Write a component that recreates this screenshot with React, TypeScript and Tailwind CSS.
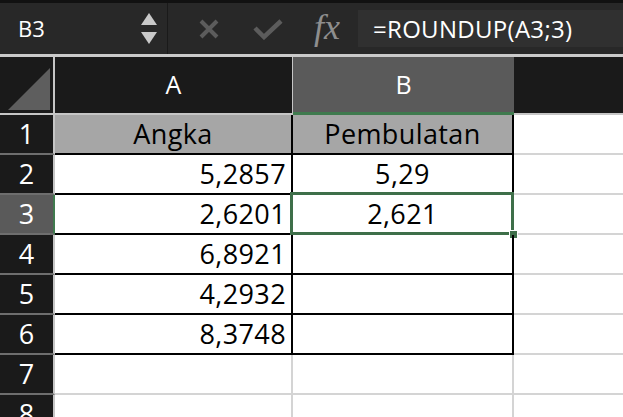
import React from 'react';

const rows = [
  { n: 1, a: 'Angka', b: 'Pembulatan', head: true },
  { n: 2, a: '5,2857', b: '5,29' },
  { n: 3, a: '2,6201', b: '2,621' },
  { n: 4, a: '6,8921', b: '' },
  { n: 5, a: '4,2932', b: '' },
  { n: 6, a: '8,3748', b: '' },
  { n: 7, a: '', b: '', empty: true },
  { n: 8, a: '', b: '', empty: true },
];

export default function App() {
  return (
    <div className="w-[623px] h-[417px] overflow-hidden bg-white font-['Open_Sans',sans-serif] font-medium">
      {/* Formula bar */}
      <div className="h-[54px] flex items-stretch bg-[#282828] border-t-[3px] border-[#111]">
        <div className="w-[168px] flex items-center justify-between pl-[18px] pr-[10px] border-r border-[#1a1a1a]">
          <span className="text-white text-[22px]">B3</span>
          <div className="flex flex-col gap-[7px] items-center">
            <svg width="16" height="12" viewBox="0 0 16 12"><path d="M8 0 L16 12 L0 12 Z" fill="#c9c9c9" /></svg>
            <svg width="16" height="12" viewBox="0 0 16 12"><path d="M0 0 L16 0 L8 12 Z" fill="#c9c9c9" /></svg>
          </div>
        </div>
        <div className="w-[190px] flex items-center">
          <svg className="ml-[31px]" width="20" height="20" viewBox="0 0 20 20">
            <path d="M2 2 L18 18 M18 2 L2 18" stroke="#5c5c5c" strokeWidth="4" />
          </svg>
          <svg className="ml-[34px]" width="30" height="22" viewBox="0 0 30 22">
            <path d="M2 10 L11 19 L28 3" stroke="#5c5c5c" strokeWidth="4.5" fill="none" />
          </svg>
          <span className="ml-[31px] text-[36px] italic text-[#8e8e8e] font-['Liberation_Serif',serif] font-normal leading-none -mt-[4px]">fx</span>
        </div>
        <div className="flex-1 my-[7px] bg-[#303030] flex items-center pl-[15px]">
          <span className="text-white text-[24px] tracking-[0.3px]">=ROUNDUP(A3;3)</span>
        </div>
      </div>
      <div className="h-[3px] bg-[#cacaca]" />

      {/* Column headers */}
      <div className="h-[58px] flex bg-[#1a1a1a]">
        <div className="w-[55px] border-r-2 border-b-2 border-[#c6c6c6] flex items-end justify-end pr-[3px] pb-[3px]">
          <svg width="42" height="42" viewBox="0 0 42 42"><path d="M42 0 L42 42 L0 42 Z" fill="#5e5e5e" /></svg>
        </div>
        <div className="w-[238px] border-r border-b-2 border-[#c6c6c6] flex items-center justify-center text-white text-[25px]">A</div>
        <div className="w-[221px] bg-[#5a5a5a] border-b-[3px] border-[#3f7a4e] flex items-center justify-center text-white text-[25px]">B</div>
        <div className="flex-1 border-b-2 border-[#c6c6c6]" />
      </div>

      {/* Rows */}
      {rows.map((r) => {
        const sel = r.n === 3;
        const gridLine = r.empty ? 'border-[#d4d4d4]' : 'border-black';
        return (
          <div key={r.n} className="h-[40px] flex">
            <div
              className={`w-[55px] border-b-2 border-b-[#6e6e6e] border-r-2 flex items-center justify-center text-white text-[27px] ${
                sel ? 'bg-[#5a5a5a] border-r-[#3f7a4e]' : 'bg-[#1a1a1a] border-r-[#c6c6c6]'
              }`}
            >
              {r.n}
            </div>
            <div
              className={`w-[238px] border-r-2 border-b-2 ${gridLine} flex items-center text-black text-[27px] tracking-[0.4px] ${
                r.head ? 'bg-[#a6a6a6] justify-center' : 'justify-end pr-[5px]'
              }`}
            >
              {r.a}
            </div>
            <div
              className={`relative w-[221px] border-r-2 border-b-2 ${gridLine} flex items-center justify-center text-black text-[27px] tracking-[0.4px] ${
                r.head ? 'bg-[#a6a6a6]' : ''
              }`}
            >
              {r.b}
              {sel && (
                <>
                  <div className="absolute -top-[3px] -left-[3px] -right-[2px] -bottom-[2px] border-[3px] border-[#3e6f49]" />
                  <div className="absolute -right-[6px] -bottom-[6px] w-[9px] h-[9px] bg-[#3e6f49] border border-white" />
                </>
              )}
            </div>
            <div className="flex-1 border-b-2 border-[#d4d4d4]" />
          </div>
        );
      })}
    </div>
  );
}
